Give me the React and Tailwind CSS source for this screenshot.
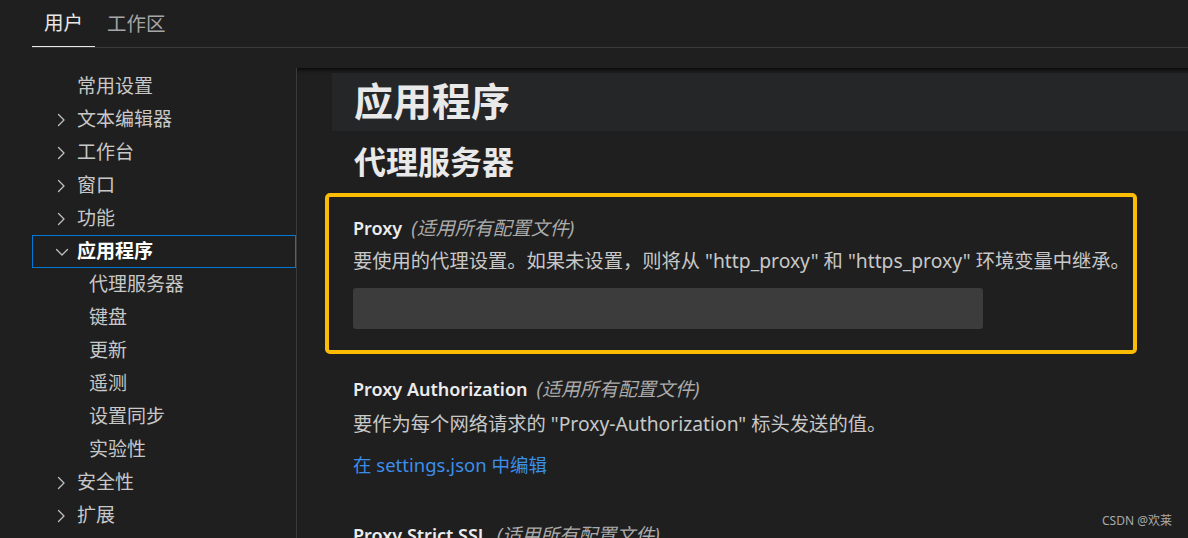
import React from 'react';

const FONT = { fontFamily: '"Noto Sans", "Noto Sans CJK SC", sans-serif' };

function Chevron({ open }) {
  return (
    <svg width="14" height="14" viewBox="0 0 14 14" fill="none" stroke="currentColor" strokeWidth="1.3" strokeLinecap="round" strokeLinejoin="round">
      {open ? <path d="M1.5 4.5 L7 10 L12.5 4.5" /> : <path d="M3.5 1.5 L9 7 L3.5 12.5" />}
    </svg>
  );
}

const tree = [
  { label: '常用设置' },
  { label: '文本编辑器', arrow: true },
  { label: '工作台', arrow: true },
  { label: '窗口', arrow: true },
  { label: '功能', arrow: true },
  { label: '应用程序', arrow: true, open: true, selected: true },
  { label: '代理服务器', child: true },
  { label: '键盘', child: true },
  { label: '更新', child: true },
  { label: '遥测', child: true },
  { label: '设置同步', child: true },
  { label: '实验性', child: true },
  { label: '安全性', arrow: true },
  { label: '扩展', arrow: true },
];

function Scope() {
  return <span className="italic font-normal text-[19px] text-[#ababab] ml-[9px]">(适用所有配置文件)</span>;
}

export default function App() {
  return (
    <div className="relative w-[1188px] h-[538px] overflow-hidden bg-[#1f1f1f] text-[#cccccc] flex flex-col" style={FONT}>
      {/* tabs */}
      <div className="pl-8">
        <div className="flex border-b border-[#3a3a3a]">
          <div className="h-[47px] px-3 flex items-center text-[19.5px] text-[#e8e8e8] border-b border-[#e8e8e8] -mb-px">用户</div>
          <div className="h-[47px] px-3 flex items-center text-[19.5px] text-[#a6a6a6]">工作区</div>
        </div>
      </div>

      <div className="flex flex-1 mt-[20px] min-h-0">
        {/* sidebar */}
        <div className="w-[297px] shrink-0 border-r border-[#3b3b3b] pl-8 pt-[2px]">
          {tree.map((item) => (
            <div
              key={item.label}
              className={
                'h-[33px] flex items-center border text-[19px] ' +
                (item.selected ? 'border-[#0078d4] text-white font-bold' : 'border-transparent text-[#c8c8c8]')
              }
            >
              {item.child ? (
                <span className="w-[56px] shrink-0" />
              ) : (
                <span className="w-[44px] shrink-0 pl-[22px] flex items-center text-[#c0c0c0]">
                  {item.arrow && <Chevron open={item.open} />}
                </span>
              )}
              <span>{item.label}</span>
            </div>
          ))}
        </div>

        {/* main */}
        <div className="flex-1 min-w-0 shadow-[inset_0_6px_5px_-5px_#000] pl-[35px] pt-[5px]">
          <div className="h-[58px] bg-[#252628] flex items-center pl-[22px]">
            <h1 className="text-[39px] font-bold text-[#e9e9e9] leading-none -mt-[4px]">应用程序</h1>
          </div>
          <h2 className="pl-[22px] mt-[11px] h-[40px] flex items-center text-[32px] font-bold text-[#e9e9e9] leading-none">代理服务器</h2>

          <div className="ml-[-7px] mt-[11px] w-[812px] h-[161px] border-[4px] border-[#fcbc04] rounded-[5px] pl-[24px] pt-[18px]">
            <div className="h-[26px] flex items-center text-[18px] font-semibold text-[#ececec]">
              Proxy<Scope />
            </div>
            <div className="mt-[7px] h-[26px] flex items-center text-[19.3px] text-[#c8c8c8] whitespace-nowrap">
              要使用的代理设置。如果未设置，则将从 "http_proxy" 和 "https_proxy" 环境变量中继承。
            </div>
            <div className="mt-[14px] w-[630px] h-[41px] bg-[#3c3c3c] rounded-[3px]" />
          </div>

          <div className="pl-[21px] pt-[22px]">
            <div className="h-[26px] flex items-center text-[18px] font-semibold text-[#ececec]">
              Proxy Authorization<Scope />
            </div>
            <div className="mt-[9px] h-[26px] flex items-center text-[19.3px] text-[#c8c8c8] whitespace-nowrap">
              要作为每个网络请求的 "Proxy-Authorization" 标头发送的值。
            </div>
            <div className="mt-[15px] h-[26px] flex items-center text-[18.5px] text-[#3b8eea]">
              在 settings.json 中编辑
            </div>
            <div className="mt-[44px] h-[26px] flex items-center text-[18px] font-semibold text-[#ececec]">
              Proxy Strict SSL<Scope />
            </div>
          </div>
        </div>
      </div>

      <div className="absolute right-[16px] bottom-[8px] text-[12px] text-[#a9a9a9]">CSDN @欢莱</div>
    </div>
  );
}
